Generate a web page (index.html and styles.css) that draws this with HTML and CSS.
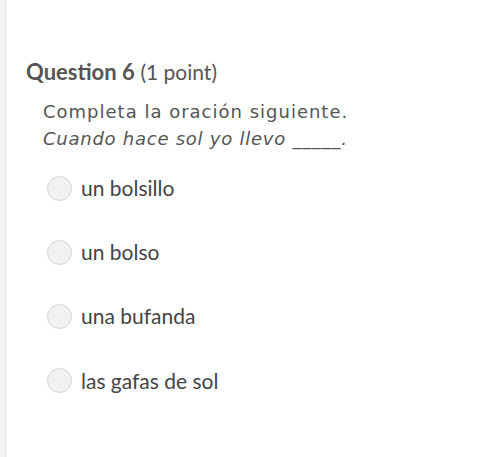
FILE: index.html
```html
<!DOCTYPE html>
<html lang="es">
<head>
<meta charset="utf-8">
<link rel="stylesheet" href="styles.css">
</head>
<body>
<div class="page">
  <div class="rail"></div>
  <div class="content">
    <h2 class="qtitle"><strong>Question 6</strong> <span class="pts">(1 point)</span></h2>
    <div class="prompt">
      <p class="line">Completa la oración siguiente.</p>
      <p class="line"><em class="ital">Cuando hace sol yo llevo _____.</em></p>
    </div>
    <ul class="options">
      <li class="opt"><span class="radio"></span><span class="label">un bolsillo</span></li>
      <li class="opt"><span class="radio"></span><span class="label">un bolso</span></li>
      <li class="opt"><span class="radio"></span><span class="label">una bufanda</span></li>
      <li class="opt"><span class="radio"></span><span class="label">las gafas de sol</span></li>
    </ul>
  </div>
</div>
</body>
</html>
```
FILE: styles.css
```css
html, body {
  margin: 0;
  padding: 0;
  background: #fff;
}
.page {
  display: flex;
  height: 457px;
  font-family: Lato, "Noto Sans", sans-serif;
}
.rail {
  width: 5px;
  background: #f4f4f4;
  border-right: 1px solid #e6e6e6;
  flex: none;
}
.content {
  flex: 1;
  padding: 59px 0 0 20px;
}
.qtitle {
  margin: 0;
  font-size: 22px;
  line-height: 26px;
  color: #555;
  font-weight: 400;
}
.qtitle strong {
  font-weight: 700;
}
.pts {
  font-size: 21px;
}
.prompt {
  margin: 13px 0 0 17px;
  color: #555;
  font-family: "DejaVu Sans", sans-serif;
  font-size: 18px;
  letter-spacing: 1px;
}
.ital {
  letter-spacing: 0.75px;
}
.line {
  margin: 0;
  line-height: 27px;
}
.options {
  list-style: none;
  margin: 23px 0 0 21px;
  padding: 0;
  display: flex;
  flex-direction: column;
  gap: 38.2px;
}
.opt {
  display: flex;
  align-items: center;
  gap: 9px;
  height: 26px;
}
.radio {
  width: 23px;
  height: 23px;
  border-radius: 50%;
  background: #f1f1f1;
  border: 1px solid #d8d8d8;
  flex: none;
}
.label {
  font-size: 21px;
  color: #444;
  line-height: 26px;
}
```
